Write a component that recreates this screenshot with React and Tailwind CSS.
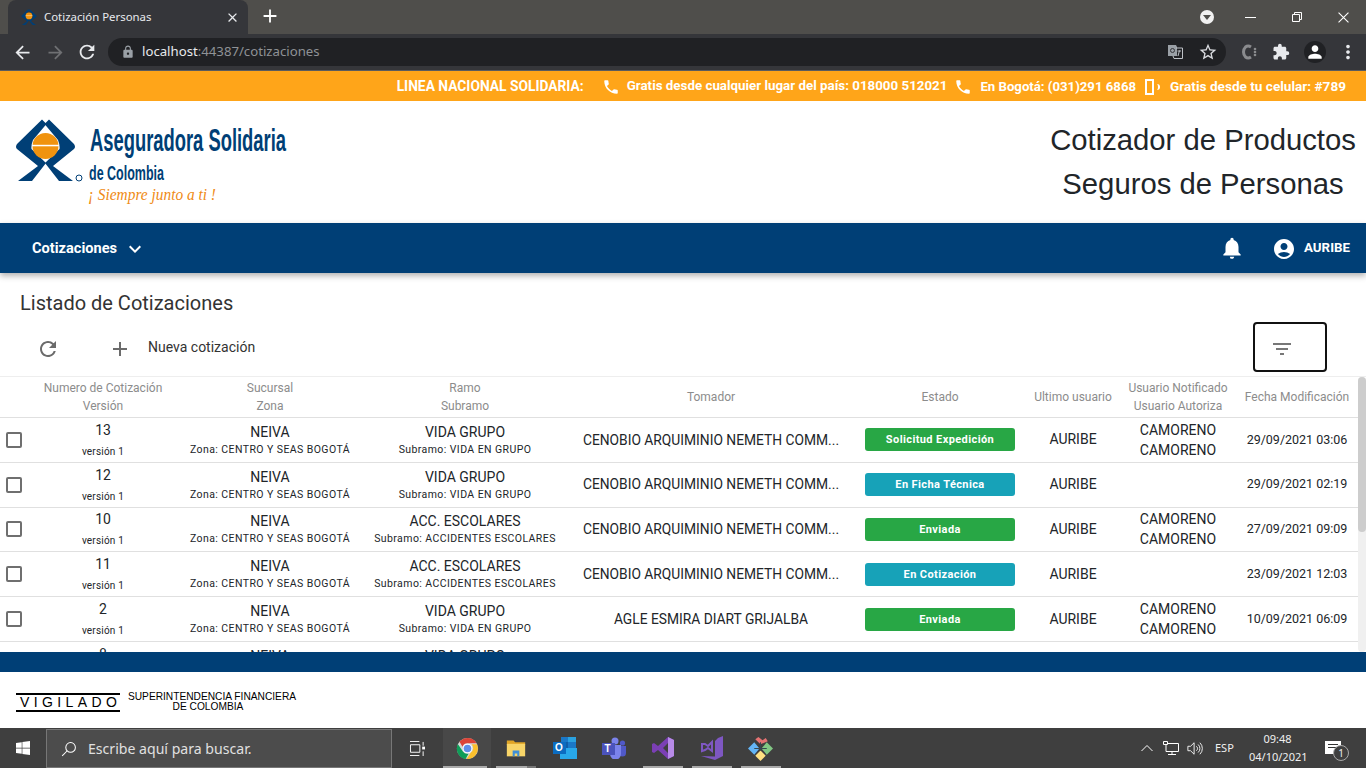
import React from "react";
import { MdPhone, MdNotifications, MdAccountCircle, MdRefresh, MdAdd, MdFilterList, MdExpandMore, MdArrowBack, MdArrowForward, MdLock, MdStarBorder, MdExtension, MdPerson, MdMoreVert, MdClose } from "react-icons/md";
import { FaWindows } from "react-icons/fa";

const rows = [
  { n: "13", s: "Zona: CENTRO Y SEAS BOGOTÁ", r: "VIDA GRUPO", sub: "Subramo: VIDA EN GRUPO", t: "CENOBIO ARQUIMINIO NEMETH COMM...", e: "Solicitud Expedición", c: "bg-[#28a745]", u: true, f: "29/09/2021 03:06" },
  { n: "12", s: "Zona: CENTRO Y SEAS BOGOTÁ", r: "VIDA GRUPO", sub: "Subramo: VIDA EN GRUPO", t: "CENOBIO ARQUIMINIO NEMETH COMM...", e: "En Ficha Técnica", c: "bg-[#17a2b8]", u: false, f: "29/09/2021 02:19" },
  { n: "10", s: "Zona: CENTRO Y SEAS BOGOTÁ", r: "ACC. ESCOLARES", sub: "Subramo: ACCIDENTES ESCOLARES", t: "CENOBIO ARQUIMINIO NEMETH COMM...", e: "Enviada", c: "bg-[#28a745]", u: true, f: "27/09/2021 09:09" },
  { n: "11", s: "Zona: CENTRO Y SEAS BOGOTÁ", r: "ACC. ESCOLARES", sub: "Subramo: ACCIDENTES ESCOLARES", t: "CENOBIO ARQUIMINIO NEMETH COMM...", e: "En Cotización", c: "bg-[#17a2b8]", u: false, f: "23/09/2021 12:03" },
  { n: "2", s: "Zona: CENTRO Y SEAS BOGOTÁ", r: "VIDA GRUPO", sub: "Subramo: VIDA EN GRUPO", t: "AGLE ESMIRA DIART GRIJALBA", e: "Enviada", c: "bg-[#28a745]", u: true, f: "10/09/2021 06:09" },
  { n: "8", s: "Zona: CENTRO Y SEAS BOGOTÁ", r: "VIDA GRUPO", sub: "Subramo: VIDA EN GRUPO", t: "", e: "", c: "", u: false, f: "" },
];

const gridCols = "grid grid-cols-[28px_150px_184px_206px_286px_172px_94px_116px_122px]";

function Mark({ className }) {
  return (
    <svg viewBox="0 0 59 62" className={className}>
      <path fill="#003f76" d="M26 0.5 L30.5 5 L17 21 Q15 26 15.5 30 L30 44 L16 62 L2 62 L22 47 L1 30 Q-1 28 1 25 Z" />
      <path fill="#003f76" d="M33 0.5 L28.5 5 L42 21 Q44 26 43.5 30 L29 44 L43 62 L57 62 L37 47 L58 30 Q60 28 58 25 Z" />
      <circle cx="29.5" cy="27" r="13" fill="#f0930f" />
      <rect x="16" y="25.8" width="27" height="1.5" fill="#fff" />
    </svg>
  );
}

function Logo() {
  return (
    <div className="flex items-start">
      <Mark className="w-[59px] h-[62px]" />
      <svg viewBox="0 0 215 90" className="w-[215px] h-[90px]">
        <text x="15" y="32" textLength="196" lengthAdjust="spacingAndGlyphs" fill="#003f76" fontFamily="Liberation Sans, sans-serif" fontWeight="700" fontSize="31">Aseguradora Solidaria</text>
        <text x="14" y="61" textLength="75" lengthAdjust="spacingAndGlyphs" fill="#003f76" fontFamily="Liberation Sans, sans-serif" fontWeight="700" fontSize="20">de Colombia</text>
        <text x="13" y="81" textLength="128" lengthAdjust="spacingAndGlyphs" fill="#ef8a14" fontFamily="Liberation Serif, serif" fontStyle="italic" fontSize="17">¡ Siempre junto a ti !</text>
        <circle cx="4" cy="59" r="3" fill="none" stroke="#003f76" strokeWidth="1" />
      </svg>
    </div>
  );
}

function Row({ d }) {
  return (
    <div className={`${gridCols} h-[44.8px] border-b border-[#e0e0e0] items-center text-center text-[14px] text-[#212529] shrink-0`}>
      <div className="flex pl-[6px]"><span className="w-[16px] h-[16px] border-2 border-[#6f6f6f] rounded-[2px]" /></div>
      <div className="flex flex-col items-center">
        <span className="leading-[20px]">{d.n}</span>
        <span className="text-[10px] leading-[16px] mt-[4px] tracking-[0.2px]">versión 1</span>
      </div>
      <div className="flex flex-col items-center">
        <span className="leading-[20px]">NEIVA</span>
        <span className="text-[10.5px] leading-[16px] tracking-[0.42px] whitespace-nowrap">{d.s}</span>
      </div>
      <div className="flex flex-col items-center">
        <span className="leading-[20px]">{d.r}</span>
        <span className="text-[10.5px] leading-[16px] tracking-[0.42px] whitespace-nowrap">{d.sub}</span>
      </div>
      <div className="whitespace-nowrap text-[13.8px]">{d.t}</div>
      <div className="flex justify-center">
        {d.e && <span className={`${d.c} w-[150px] h-[23px] rounded-[3px] text-white text-[11px] font-bold leading-[23px] tracking-[0.4px]`}>{d.e}</span>}
      </div>
      <div>{d.f ? "AURIBE" : ""}</div>
      <div className="leading-[20px]">{d.u && <>CAMORENO<br />CAMORENO</>}</div>
      <div className="whitespace-nowrap text-[12.5px]">{d.f}</div>
    </div>
  );
}

function Th({ a, b }) {
  return (
    <div className="text-center leading-[18px]">
      <div>{a}</div>
      {b && <div>{b}</div>}
    </div>
  );
}

function Chrome() {
  return (
    <svg viewBox="0 0 24 24" className="w-[23px] h-[23px]">
      <circle cx="12" cy="12" r="11" fill="#d9d9d9" />
      <path fill="#dc4437" d="M12 1a11 11 0 0 1 9.5 5.5H12a5.5 5.5 0 0 0-5.2 3.6L3.6 5A11 11 0 0 1 12 1z" />
      <path fill="#0f9d58" d="M1.9 7.4 7.2 15a5.5 5.5 0 0 0 5.9 2.4L10 23A11 11 0 0 1 1.9 7.4z" />
      <path fill="#fbc02d" d="M21.9 7.5A11 11 0 0 1 11 23l4.6-7a5.5 5.5 0 0 0 .6-8.4z" />
      <circle cx="12" cy="12" r="5" fill="#fff" />
      <circle cx="12" cy="12" r="4" fill="#5f8fe8" />
    </svg>
  );
}

function Folder() {
  return (
    <svg viewBox="0 0 24 24" className="w-[22px] h-[20px]">
      <path fill="#e0a526" d="M1 3h8l2 2h12v3H1z" />
      <path fill="#f8d568" d="M1 7h22v15H1z" />
      <path fill="#3f8fd6" d="M8 15h8v7h-2.5v-3.5h-3V22H8z" />
    </svg>
  );
}

function Outlook() {
  return (
    <div className="relative w-[24px] h-[22px]">
      <svg viewBox="0 0 24 22" className="w-full h-full">
        <path fill="#1a78c8" d="M8 0h15v11H8z" />
        <path fill="#2aa2e0" d="M15 0h8v5h-8z" />
        <path fill="#0f5ea8" d="M8 5h7v6H8z" />
        <path fill="#28a8ea" d="M7 11h17v11H7z" />
        <path fill="#0b6cc1" d="M0 5h13v12H0z" />
      </svg>
      <span className="absolute left-[2px] top-[4px] text-white text-[10px] font-bold leading-[14px] font-['Liberation_Sans',sans-serif]">O</span>
    </div>
  );
}

function Teams() {
  return (
    <div className="relative w-[24px] h-[22px]">
      <svg viewBox="0 0 24 22" className="w-full h-full">
        <circle cx="13" cy="4" r="3.5" fill="#7b83eb" />
        <circle cx="20.5" cy="6" r="2.6" fill="#5059c9" />
        <path fill="#5059c9" d="M17 9h7v7a3.5 3.5 0 0 1-7 0z" />
        <path fill="#7b83eb" d="M8 8h11v9a5.5 5.5 0 0 1-11 0z" />
        <path fill="#4b53bc" d="M0 6h13v12H0z" />
      </svg>
      <span className="absolute left-[3px] top-[6px] text-white text-[10px] font-bold leading-[12px] font-['Liberation_Sans',sans-serif]">T</span>
    </div>
  );
}

function VS({ c1, c2 }) {
  return (
    <svg viewBox="0 0 24 24" className="w-[24px] h-[24px]">
      <path fill={c1} d="M17 1 23 4v16l-6 3-10-9-4 3-2-1V8l2-1 4 3zM17 7l-5 5 5 5z" />
      <path fill={c2} d="M17 1 23 4v16l-6 3z" />
    </svg>
  );
}

function VS2() {
  return (
    <svg viewBox="0 0 24 24" className="w-[24px] h-[24px]">
      <path fill="#7e57c2" d="M18 2 23 0v20L15 24 1 20l14 0.5V5z" />
      <path fill="none" stroke="#7e57c2" strokeWidth="2" d="M2 8v7l3 -1 3-2 4 3V6L8 10 5 8z" />
    </svg>
  );
}

function Kraken() {
  return (
    <svg viewBox="0 0 24 24" className="w-[25px] h-[25px]">
      <path fill="#e57373" d="M12 8 7 3l3-2 4 3 3-2 2 3z" />
      <path fill="#64b5f6" d="M0 12l6-6 5 6-5 6z" />
      <path fill="#81c784" d="M13 12l5-6 6 6-6 6z" />
      <path fill="#ffe082" d="M12 14l5 5-5 5-5-5z" />
      <path fill="none" stroke="#37474f" strokeWidth="1" d="M6 12h12M12 6v8" />
    </svg>
  );
}

export default function App() {
  return (
    <div className="w-[1366px] h-[768px] overflow-hidden flex flex-col bg-white font-['Roboto',sans-serif]">
      {/* Tab strip */}
      <div className="h-[34px] bg-[#4f4e4b] flex items-end shrink-0 font-['Noto_Sans','Open_Sans',sans-serif]">
        <div className="ml-[8px] w-[240px] h-[34px] mt-auto bg-[#35363a] rounded-t-[8px] flex items-center pl-[13px] pr-[8px]">
          <Mark className="w-[16px] h-[16px]" />
          <span className="ml-[7px] text-[#e8eaed] text-[11.4px] whitespace-nowrap">Cotización Personas</span>
          <MdClose className="ml-auto text-[#e8eaed] w-[15px] h-[15px]" />
        </div>
        <MdAdd className="ml-[11px] mb-[7px] text-white w-[22px] h-[22px]" />
        <div className="ml-auto flex items-center h-full">
          <span className="w-[14px] h-[14px] rounded-full bg-[#f1f1f1] flex items-center justify-center mr-[31px]">
            <span className="w-0 h-0 border-l-[4px] border-r-[4px] border-t-[5px] border-l-transparent border-r-transparent border-t-[#4f4e4b]" />
          </span>
          <span className="w-[11px] h-[1px] bg-white mr-[36px]" />
          <svg viewBox="0 0 10 10" className="w-[10px] h-[10px] mr-[36px]"><path fill="none" stroke="#fff" d="M.5 2.5h7v7h-7zM2.5 2.5v-2h7v7h-2" /></svg>
          <svg viewBox="0 0 10 10" className="w-[11px] h-[11px] mr-[17px]"><path fill="none" stroke="#fff" d="M.5.5l9 9M9.5.5l-9 9" /></svg>
        </div>
      </div>
      {/* Toolbar */}
      <div className="h-[37px] bg-[#35363a] flex items-center shrink-0 border-b border-[#5a5b5e] font-['Noto_Sans','Open_Sans',sans-serif]">
        <MdArrowBack className="ml-[12px] text-[#e8eaed] w-[21px] h-[21px]" />
        <MdArrowForward className="ml-[12px] text-[#6f7073] w-[21px] h-[21px]" />
        <MdRefresh className="ml-[10px] text-[#e8eaed] w-[22px] h-[22px]" />
        <div className="ml-[10px] flex-none w-[1118px] h-[28px] rounded-full bg-[#202124] flex items-center pl-[13px] pr-[8px]">
          <MdLock className="text-[#9aa0a6] w-[14px] h-[14px]" />
          <span className="ml-[7px] text-[13.2px] text-[#e8eaed] whitespace-nowrap">localhost<span className="text-[#8f9296]">:44387/cotizaciones</span></span>
          <svg viewBox="0 0 15 14" className="ml-auto w-[15px] h-[14px]">
            <path fill="#9aa0a6" d="M0 0h8l1 2v9H0z" />
            <path fill="none" stroke="#bdc1c6" d="M8 3h6.5v10.5H6l-1-2.5" />
            <circle cx="4.5" cy="5.5" r="2" fill="none" stroke="#35363a" />
            <path stroke="#bdc1c6" d="M9.5 6h3.5M11.5 5.5 10 11" />
          </svg>
          <MdStarBorder className="ml-[15px] text-[#dadce0] w-[20px] h-[20px]" />
        </div>
        <svg viewBox="0 0 16 16" className="ml-[15px] w-[16px] h-[16px]">
          <path fill="none" stroke="#8a8b8e" strokeWidth="3" d="M10 3Q7 1 4.500 3 Q2.500 5 2.500 8 Q2.500 11 4.500 13 Q7 15 10 13" />
          <circle cx="14" cy="5" r="1.300" fill="#8a8b8e" />
          <circle cx="14" cy="8" r="1.300" fill="#8a8b8e" />
          <circle cx="14" cy="11" r="1.300" fill="#8a8b8e" />
        </svg>
        <MdExtension className="ml-[15px] text-[#e8eaed] w-[18px] h-[18px]" />
        <span className="ml-[14px] w-[22px] h-[22px] rounded-full bg-[#202124] flex items-center justify-center">
          <MdPerson className="text-white w-[20px] h-[20px]" />
        </span>
        <MdMoreVert className="ml-[11px] text-[#e8eaed] w-[22px] h-[22px]" />
      </div>
      {/* Orange bar */}
      <div className="h-[30px] bg-[#ffa519] flex items-center justify-end pr-[20px] pt-[1px] text-white font-bold shrink-0 whitespace-nowrap">
        <span className="text-[13.8px]">LINEA NACIONAL SOLIDARIA:</span>
        <MdPhone className="ml-[18px] w-[18px] h-[18px]" />
        <span className="ml-[7px] text-[13.35px]">Gratis desde cualquier lugar del país: 018000 512021</span>
        <MdPhone className="ml-[7px] w-[18px] h-[18px]" />
        <span className="ml-[8px] text-[13.2px]">En Bogotá: (031)291 6868</span>
        <span className="ml-[9px] w-[9px] h-[16px] border-2 border-white" />
        <span className="ml-[2px] w-[4px] h-[6px] border-r-2 border-white rounded-r-full" />
        <span className="ml-[10px] text-[13.6px]">Gratis desde tu celular: #789</span>
      </div>
      {/* Header */}
      <div className="h-[122px] flex justify-between shrink-0 text-[#212529]">
        <div className="pl-[16px] pt-[18px]"><Logo /></div>
        <div className="w-[306px] mr-[10px] pt-[17px] text-[29.25px] leading-[44px] text-center whitespace-nowrap font-['Liberation_Sans',sans-serif]">
          <div>Cotizador de Productos</div>
          <div>Seguros de Personas</div>
        </div>
      </div>
      {/* Nav */}
      <div className="h-[50px] bg-[#003f76] flex items-center pl-[32px] pr-[16px] text-white shrink-0 shadow-[0_3px_6px_rgba(0,0,0,0.3)] relative">
        <span className="text-[14.6px] font-bold mt-[1px]">Cotizaciones</span>
        <MdExpandMore className="ml-[6px] mt-[2px] w-[24px] h-[24px]" />
        <MdNotifications className="ml-auto w-[26px] h-[26px]" />
        <MdAccountCircle className="ml-[27px] mt-[2px] w-[24px] h-[24px]" />
        <span className="ml-[8px] -mt-[1px] text-[13.3px] font-bold">AURIBE</span>
      </div>
      {/* Content */}
      <div className="h-[379px] overflow-hidden shrink-0 flex flex-col">
        <h1 className="pl-[20px] pt-[18px] text-[20px] leading-[24px] text-[#333] font-normal">Listado de Cotizaciones</h1>
        <div className="h-[54px] flex items-start shrink-0 mt-[7px]">
          <MdRefresh className="ml-[36px] mt-[15px] w-[24px] h-[24px] text-[#6b6b6b]" />
          <MdAdd className="ml-[48px] mt-[15px] w-[24px] h-[24px] text-[#6b6b6b]" />
          <span className="ml-[16px] mt-[17px] text-[14px] leading-[16px] text-[#333]">Nueva cotización</span>
          <div className="ml-auto mr-[39px] w-[74px] h-[50px] border-2 border-[#111] rounded-[4px] flex items-center pl-[15px] pt-[4px]">
            <MdFilterList className="w-[24px] h-[24px] text-[#777]" />
          </div>
        </div>
        <div className="relative flex-1 border-t border-[#eeeeee] overflow-hidden flex flex-col">
          <div className={`${gridCols} h-[41px] shrink-0 items-center border-b border-[#e0e0e0] text-[12px] text-[#8c8c8c]`}>
            <div />
            <Th a="Numero de Cotización" b="Versión" />
            <Th a="Sucursal" b="Zona" />
            <Th a="Ramo" b="Subramo" />
            <Th a="Tomador" />
            <Th a="Estado" />
            <Th a="Ultimo usuario" />
            <Th a="Usuario Notificado" b="Usuario Autoriza" />
            <Th a="Fecha Modificación" />
          </div>
          {rows.map((d, i) => <Row key={i} d={d} />)}
          <div className="absolute right-0 top-0 bottom-0 w-[8px] bg-[#f0f0f0] rounded-[4px]">
            <div className="w-[8px] h-[155px] bg-[#cdcdcd] rounded-[4px]" />
          </div>
        </div>
      </div>
      {/* Footer bar */}
      <div className="h-[20px] bg-[#003f76] shrink-0" />
      <div className="h-[56px] bg-white shrink-0 flex items-center pt-[4px] pl-[16px] font-['Liberation_Sans',sans-serif] text-black">
        <div className="w-[104px] h-[19px] border-y-2 border-black text-[14px] leading-[15px] tracking-[4.4px] pl-[4px] whitespace-nowrap">VIGILADO</div>
        <div className="ml-[7px] w-[170px] text-[10.2px] leading-[10px] text-center whitespace-nowrap">SUPERINTENDENCIA FINANCIERA<br /><span className="pr-[8px]">DE COLOMBIA</span></div>
      </div>
      {/* Taskbar */}
      <div className="h-[40px] bg-[#3f3f3f] shrink-0 flex items-center text-white font-['Noto_Sans','Open_Sans',sans-serif]">
        <div className="w-[46px] flex justify-center"><FaWindows className="w-[16px] h-[16px]" /></div>
        <div className="w-[346px] h-[39px] mt-[1px] bg-[#4c4c4c] border border-[#777] flex items-center pl-[14px]">
          <svg viewBox="0 0 20 20" className="w-[16px] h-[16px]"><circle cx="12" cy="8" r="6" fill="none" stroke="#fff" strokeWidth="1.3" /><path stroke="#fff" strokeWidth="1.3" d="M7.5 12.5 1.5 18.5" /></svg>
          <span className="ml-[11px] text-[14.1px] text-[#e0e0e0] whitespace-nowrap">Escribe aquí para buscar.</span>
        </div>
        <div className="ml-[16px] w-[18px] flex justify-center">
          <svg viewBox="0 0 18 16" className="w-[17px] h-[15px]"><path fill="none" stroke="#fff" d="M1 .5h10M1 15.5h10M1.5 4h10v8h-10zM15 1v4M15 11v5" /><rect x="14" y="6" width="3" height="3" fill="#fff" /></svg>
        </div>
        <div className="ml-[17px] w-[48px] h-full flex items-center justify-center relative bg-[#484848]">
          <Chrome />
          <span className="absolute bottom-0 left-0 right-[4px] h-[2px] bg-[#aaa]" />
        </div>
        <div className="w-[50px] h-full flex items-center justify-center relative">
          <Folder />
          <span className="absolute bottom-0 left-[5px] right-[14px] h-[2px] bg-[#aaa]" />
          <span className="absolute bottom-0 left-[36px] right-[5px] h-[2px] bg-[#777]" />
        </div>
        <div className="w-[48px] h-full flex items-center justify-center"><Outlook /></div>
        <div className="w-[49px] h-full flex items-center justify-center"><Teams /></div>
        <div className="w-[49px] h-full flex items-center justify-center relative"><VS c1="#7b3fb5" c2="#b88be8" /><span className="absolute bottom-0 left-[5px] right-[4px] h-[2px] bg-[#aaa]" /></div>
        <div className="w-[49px] h-full flex items-center justify-center relative"><VS2 /><span className="absolute bottom-0 left-[5px] right-[4px] h-[2px] bg-[#aaa]" /></div>
        <div className="w-[49px] h-full flex items-center justify-center relative"><Kraken /><span className="absolute bottom-0 left-[5px] right-[4px] h-[2px] bg-[#aaa]" /></div>

        <div className="ml-auto flex items-center h-full text-[12px] text-[#f0f0f0]">
          <svg viewBox="0 0 12 8" className="w-[12px] h-[8px]"><path fill="none" stroke="#fff" d="M.5 7 6 1.5 11.5 7" /></svg>
          <svg viewBox="0 0 16 16" className="ml-[10px] w-[16px] h-[16px]"><path fill="none" stroke="#fff" d="M.5 1.5h4v3h-4zM4 3.5h11.5v8H3v-7M9 11.5v3M5 14.5h8" /></svg>
          <svg viewBox="0 0 18 16" className="ml-[8px] w-[16px] h-[15px]"><path fill="none" stroke="#fff" d="M1 5.5h3l4-4v13l-4-4H1zM10.5 5.5a3 3 0 0 1 0 5M12.5 3.5a6 6 0 0 1 0 9M14.5 1.5a9 9 0 0 1 0 13" /></svg>
          <span className="ml-[12px] w-[19px] text-[11px]">ESP</span>
          <div className="ml-[15px] w-[57px] text-center leading-[18px] text-[11px] whitespace-nowrap">
            <div>09:48</div>
            <div>04/10/2021</div>
          </div>
          <div className="ml-[19px] mr-[25px] mb-[2px] relative w-[16px] h-[13px] bg-white">
            <span className="block mx-[3px] mt-[3px] h-[1px] bg-[#333]" />
            <span className="block mx-[3px] mt-[2px] h-[1px] bg-[#333]" />
            <span className="absolute -right-[8px] top-[4px] w-[16px] h-[16px] rounded-full bg-[#3f3f3f] border border-[#aaa] text-[10px] leading-[14px] text-center">1</span>
          </div>
        </div>
      </div>
    </div>
  );
}
